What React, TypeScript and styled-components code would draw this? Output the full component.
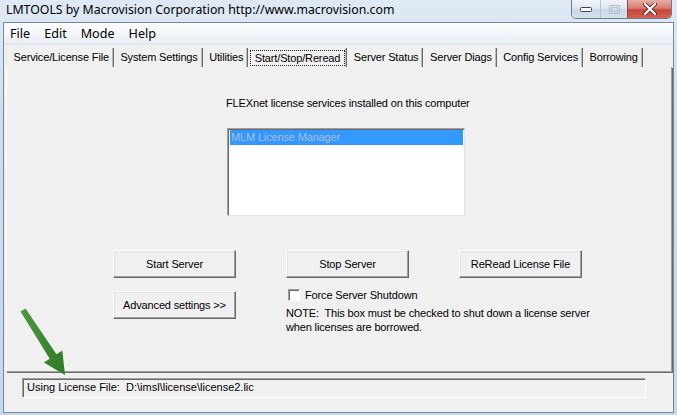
import React from 'react';
import styled, { createGlobalStyle } from 'styled-components';

const Global = createGlobalStyle`
  html, body { margin: 0; padding: 0; background: #cfdff0; }
  body { font-family: "Liberation Sans", Arial, sans-serif; letter-spacing: -0.15px; }
  #root { width: 677px; height: 415px; }
`;

const Window = styled.div`
  position: relative;
  width: 677px;
  height: 415px;
  box-sizing: border-box;
  display: flex;
  flex-direction: column;
  background: linear-gradient(180deg, #dfe9f5 0%, #cddded 30%, #c5d8ec 100%);
  overflow: hidden;
`;

const TitleBar = styled.div`
  height: 22px;
  flex: none;
  display: flex;
  justify-content: space-between;
  align-items: flex-start;
  padding: 0 6px 0 6px;
`;

const Title = styled.span`
  font-family: "Noto Sans", "Open Sans", sans-serif;
  font-size: 12.3px;
  line-height: 20px;
  color: #000;
  letter-spacing: 0;
`;

const CaptionGroup = styled.div`
  display: flex;
  height: 18px;
  margin-right: -1px;
  border: 1px solid #6d7a8c;
  border-top: none;
  border-radius: 0 0 5px 5px;
  overflow: hidden;
`;

const CaptionButton = styled.div<{ $w: number; $close?: boolean }>`
  width: ${(p) => p.$w}px;
  height: 18px;
  display: flex;
  align-items: center;
  justify-content: center;
  box-sizing: border-box;
  border-left: ${(p) => (p.$close ? '1px solid #8a4a46' : '1px solid #b5c3d4')};
  background: ${(p) =>
    p.$close
      ? 'linear-gradient(180deg, #e7aea3 0%, #d87e70 45%, #c8453a 55%, #d4624f 100%)'
      : 'linear-gradient(180deg, #f0f4f9 0%, #dfe7f1 45%, #c9d6e5 55%, #d6e2ef 100%)'};
  &:first-child { border-left: none; }
`;

const Client = styled.div`
  flex: 1;
  margin: 0 3px 2px 3px;
  border: 1px solid #7486a0;
  display: flex;
  flex-direction: column;
  background: #f0f0f0;
  min-height: 0;
`;

const MenuBar = styled.div`
  height: 21px;
  flex: none;
  display: flex;
  align-items: center;
  background: linear-gradient(180deg, #fcfdfe 0%, #f2f5fa 60%, #e6ebf3 100%);
  border-bottom: 1px solid #dde3ec;
`;

const MenuItem = styled.span`
  font-family: "Noto Sans", "Open Sans", sans-serif;
  font-size: 12.6px;
  letter-spacing: 0;
  color: #000;
  padding: 0 7px 0 6px;
  margin-right: 1px;
`;

const TabStrip = styled.div`
  height: 19px;
  flex: none;
  margin-top: 3px;
  display: flex;
  padding-left: 3px;
`;

const Tab = styled.div<{ $active?: boolean }>`
  font-size: 11px;
  line-height: 19px;
  height: 19px;
  box-sizing: border-box;
  color: #000;
  padding: 0 ${(p) => (p.$active ? '1px' : '4px')} 0 ${(p) => (p.$active ? '1.5px' : '6.5px')};
  border-right: 1px solid #6b6b6b;
  box-shadow: inset -1px 0 0 #b9b9b9;
  display: flex;
  align-items: center;
  white-space: nowrap;
`;

const FocusLabel = styled.span`
  border: 1px dotted #222;
  line-height: 14px;
  padding: 0 4px 0 4px;
`;

const Panel = styled.div`
  flex: 1;
  min-height: 0;
  margin: 0 1px 0 2px;
  border-left: 1px solid #ffffff;
  border-right: 1px solid #a0a0a0;
  border-bottom: 1px solid #a0a0a0;
  box-shadow: 1px 1px 0 #6a6a6a;
  display: flex;
  flex-direction: column;
  padding-top: 29px;
`;

const Heading = styled.div`
  font-size: 11px;
  line-height: 14px;
  margin-left: 219px;
  color: #000;
`;

const ListBox = styled.div`
  margin: 18px 0 0 220px;
  width: 238px;
  height: 88px;
  box-sizing: border-box;
  background: #fff;
  border-top: 1px solid #a0a0a0;
  border-left: 1px solid #a0a0a0;
  border-right: 1px solid #e3e3e3;
  border-bottom: 1px solid #e3e3e3;
  box-shadow: inset 1px 1px 0 #696969;
  padding: 1px 1px 0 2px;
`;

const ListItem = styled.div<{ $selected?: boolean }>`
  height: 15px;
  line-height: 15px;
  font-size: 11px;
  padding-left: 1px;
  color: ${(p) => (p.$selected ? '#a9bcd6' : '#000')};
  background: ${(p) => (p.$selected ? '#3399ff' : 'transparent')};
`;

const ButtonGrid = styled.div`
  margin: 34px 0 0 106px;
  display: grid;
  grid-template-columns: 123px 123px 123px;
  column-gap: 50px;
  row-gap: 10px;
  align-items: start;
`;

const Button = styled.div<{ $offset?: number }>`
  height: 28px;
  box-sizing: border-box;
  margin-top: ${(p) => p.$offset ?? 0}px;
  display: flex;
  align-items: center;
  justify-content: center;
  font-size: 11px;
  color: #000;
  background: #f0f0f0;
  border-top: 1px solid #ffffff;
  border-left: 1px solid #ffffff;
  border-right: 1px solid #696969;
  border-bottom: 1px solid #696969;
  box-shadow: inset -1px -1px 0 #a0a0a0, inset 1px 1px 0 #e3e3e3;
`;

const ForceArea = styled.div`
  grid-column: 2 / span 2;
  display: flex;
  flex-direction: column;
  white-space: nowrap;
`;

const CheckRow = styled.div`
  display: flex;
  align-items: center;
  height: 13px;
  margin-left: 2px;
  gap: 5px;
  font-size: 11px;
`;

const CheckBox = styled.span`
  width: 12px;
  height: 12px;
  box-sizing: border-box;
  background: #fff;
  border-top: 1px solid #a0a0a0;
  border-left: 1px solid #a0a0a0;
  border-right: 1px solid #ffffff;
  border-bottom: 1px solid #ffffff;
  box-shadow: inset 1px 1px 0 #696969;
`;

const Note = styled.div`
  margin-top: 5px;
  font-size: 11px;
  line-height: 14px;
  color: #000;
  white-space: pre;
`;

const StatusArea = styled.div`
  height: 34px;
  flex: none;
  display: flex;
  align-items: flex-start;
  padding: 6px 0 0 18px;
`;

const StatusBox = styled.div`
  width: 624px;
  height: 20px;
  box-sizing: border-box;
  border-top: 1px solid #a0a0a0;
  border-left: 1px solid #a0a0a0;
  border-right: 1px solid #ffffff;
  border-bottom: 1px solid #ffffff;
  box-shadow: inset 1px 1px 0 #696969;
  font-size: 11px;
  letter-spacing: 0;
  line-height: 17px;
  padding-left: 4px;
  white-space: pre;
  color: #000;
`;

const Arrow = styled.svg`
  position: absolute;
  left: 18px;
  top: 305px;
  width: 52px;
  height: 75px;
  pointer-events: none;
`;

const tabs = [
  'Service/License File',
  'System Settings',
  'Utilities',
  'Start/Stop/Reread',
  'Server Status',
  'Server Diags',
  'Config Services',
  'Borrowing',
];

export default function App() {
  return (
    <>
      <Global />
      <Window>
        <TitleBar>
          <Title>LMTOOLS by Macrovision Corporation http://www.macrovision.com</Title>
          <CaptionGroup>
            <CaptionButton $w={28}>
              <svg width="12" height="6" viewBox="0 0 12 6">
                <rect x="0.5" y="1.5" width="11" height="4" rx="1" fill="#fff" stroke="#3c4452" />
              </svg>
            </CaptionButton>
            <CaptionButton $w={27}>
              <svg width="11" height="9" viewBox="0 0 11 9">
                <rect x="0.5" y="0.5" width="10" height="8" fill="none" stroke="#b4bfcc" />
                <rect x="2.5" y="2.5" width="6" height="4" fill="none" stroke="#b4bfcc" />
              </svg>
            </CaptionButton>
            <CaptionButton $w={44} $close>
              <svg width="14" height="12" viewBox="0 0 14 12">
                <path d="M2 1 L12 11 M12 1 L2 11" stroke="#5a2a26" strokeWidth="4" strokeLinecap="round" />
                <path d="M2 1 L12 11 M12 1 L2 11" stroke="#fff" strokeWidth="2.2" strokeLinecap="round" />
              </svg>
            </CaptionButton>
          </CaptionGroup>
        </TitleBar>
        <Client>
          <MenuBar>
            <MenuItem>File</MenuItem>
            <MenuItem>Edit</MenuItem>
            <MenuItem>Mode</MenuItem>
            <MenuItem>Help</MenuItem>
          </MenuBar>
          <TabStrip>
            {tabs.map((t) =>
              t === 'Start/Stop/Reread' ? (
                <Tab key={t} $active>
                  <FocusLabel>{t}</FocusLabel>
                </Tab>
              ) : (
                <Tab key={t}>{t}</Tab>
              )
            )}
          </TabStrip>
          <Panel>
            <Heading>FLEXnet license services installed on this computer</Heading>
            <ListBox>
              <ListItem $selected>MLM License Manager</ListItem>
            </ListBox>
            <ButtonGrid>
              <Button>Start Server</Button>
              <Button>Stop Server</Button>
              <Button>ReRead License File</Button>
              <Button $offset={3}>Advanced settings &gt;&gt;</Button>
              <ForceArea>
                <CheckRow>
                  <CheckBox />
                  <span>Force Server Shutdown</span>
                </CheckRow>
                <Note>
                  {'NOTE:  This box must be checked to shut down a license server\nwhen licenses are borrowed.'}
                </Note>
              </ForceArea>
            </ButtonGrid>
          </Panel>
          <StatusArea>
            <StatusBox>{'Using License File:  D:\\imsl\\license\\license2.lic'}</StatusBox>
          </StatusArea>
        </Client>
        <Arrow viewBox="0 0 52 75">
          <defs>
            <linearGradient id="ag" x1="0" y1="0" x2="1" y2="1">
              <stop offset="0" stopColor="#4c9a3e" />
              <stop offset="1" stopColor="#2f7a28" />
            </linearGradient>
          </defs>
          <polygon
            points="7.5,3.4 38.5,49.3 44.3,45.6 47,70 25.9,57.4 31.7,53.7 2.5,6.6"
            fill="url(#ag)"
          />
        </Arrow>
      </Window>
    </>
  );
}
